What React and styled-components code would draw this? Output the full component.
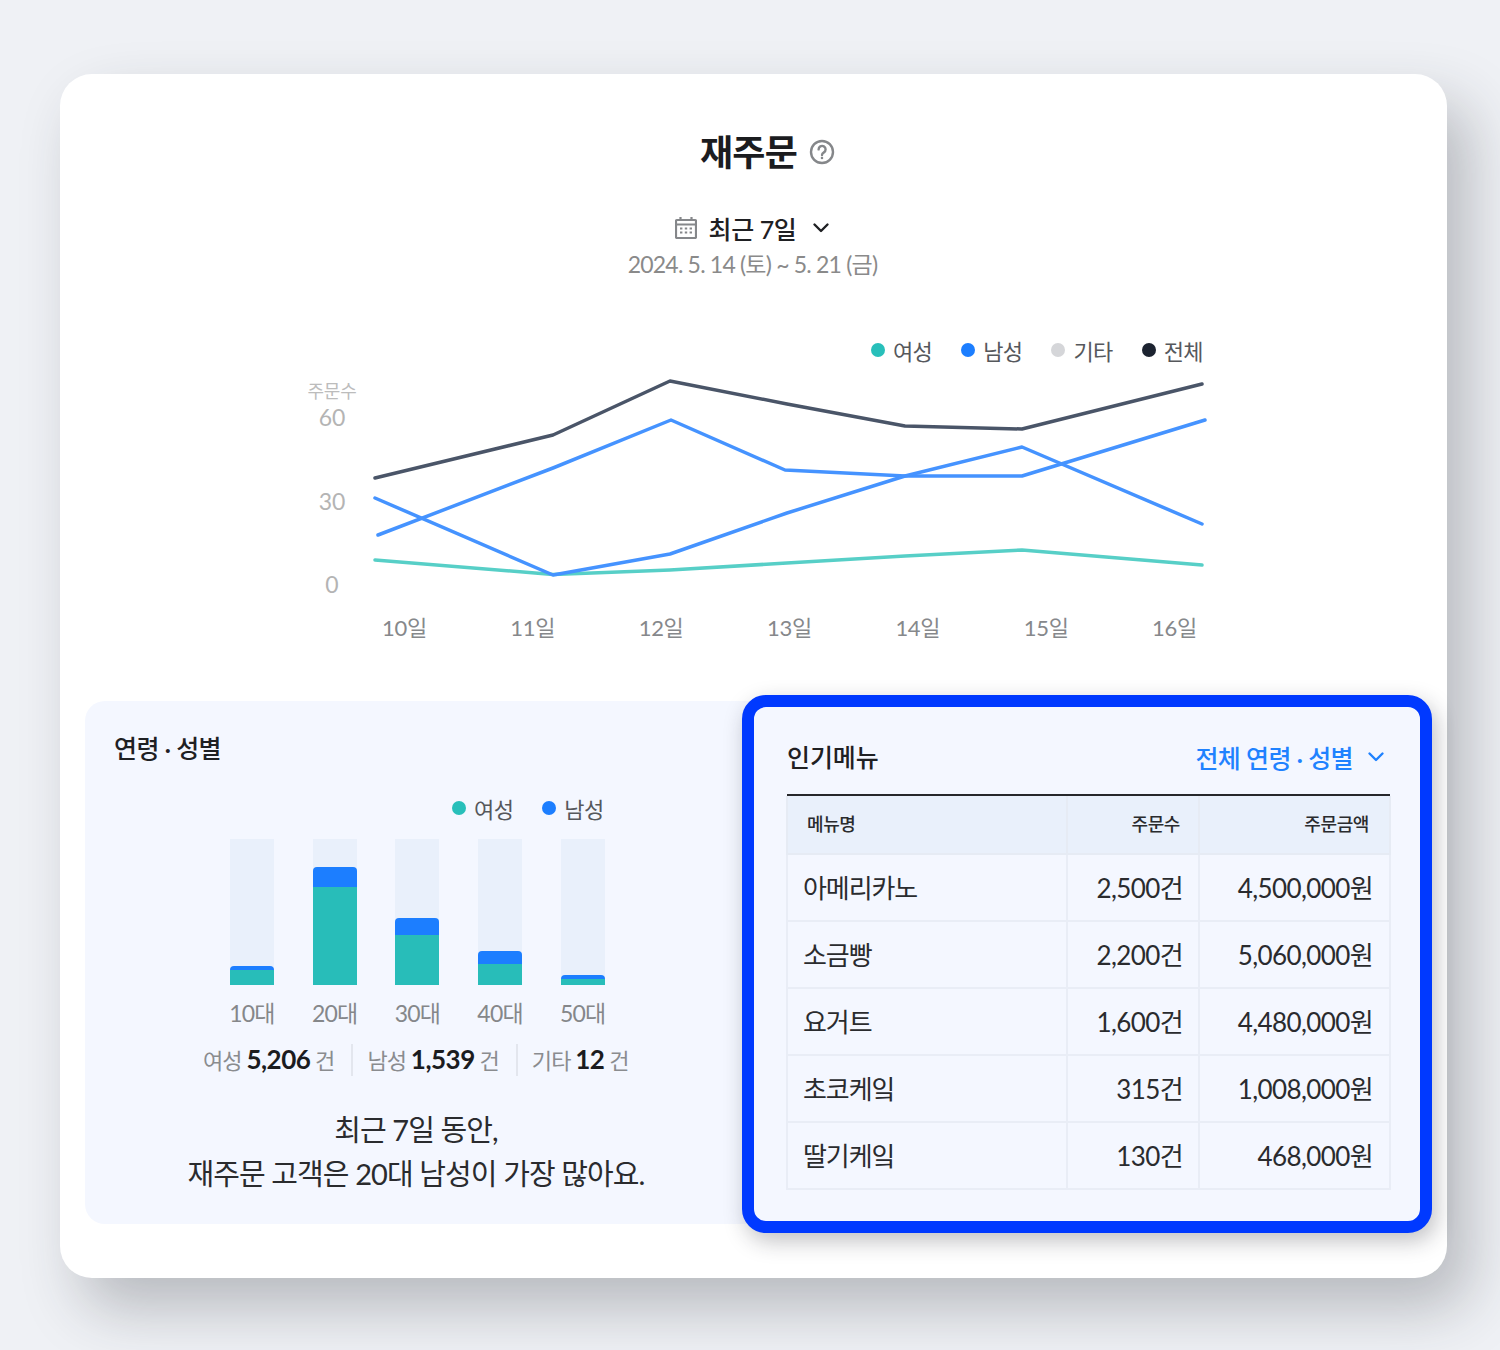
import React from 'react';
import styled, { createGlobalStyle } from 'styled-components';

const Global = createGlobalStyle`
  html, body { margin: 0; padding: 0; background: #eff1f5; }
  * { box-sizing: border-box; }
  body { font-family: Lato, "Noto Sans CJK KR", sans-serif; color: #1f2023; }
`;
const Page = styled.div`
  width: 1500px; height: 1350px; padding: 74px 0 0 60px; overflow: hidden;
`;
const Card = styled.main`
  width: 1387px; height: 1204px; background: #fff; border-radius: 32px;
  box-shadow: 22px 30px 60px rgba(40, 42, 50, 0.28);
  padding-top: 50px; display: flex; flex-direction: column;
`;
const TitleRow = styled.div`
  display: flex; justify-content: center; align-items: center; gap: 12px;
  padding-left: 28px; height: 56px;
`;
const Title = styled.h1`
  margin: 0; font-size: 36px; line-height: 56px; font-weight: 700; letter-spacing: -0.8px; color: #1b1c1f;
`;
const DateBlock = styled.div`
  margin-top: 30px; padding-right: 2px; display: flex; flex-direction: column; align-items: center;
`;
const RangeBtn = styled.div`
  display: flex; align-items: center; height: 36px; font-size: 25px; font-weight: 500;
  letter-spacing: -0.4px; color: #1f2023; gap: 12px;
  svg:last-child { margin-left: 4px; }
`;
const DateText = styled.div`
  font-size: 23px; line-height: 36px; color: #8a8a8a; letter-spacing: -0.8px; font-weight: 400;
`;
const ChartBlock = styled.section`
  margin: 50px 0 0 247px; width: 900px;
`;
const Legend = styled.div`
  display: flex; justify-content: flex-end; gap: 29px;
  padding-right: 4px; height: 36px; align-items: center;
`;
const LegendItem = styled.div`
  display: flex; align-items: center; gap: 8px; font-size: 22px; color: #56585c; letter-spacing: -0.6px;
`;
const Dot = styled.span`
  width: 14px; height: 14px; border-radius: 50%; background: ${p => p.$c};
`;
const PlotRow = styled.div`
  display: flex; height: 222px; margin-top: 2px;
`;
const YAxis = styled.div`
  width: 50px; flex-shrink: 0; display: flex; flex-direction: column; align-items: center; padding-top: 12px;
`;
const YCaption = styled.div`
  font-size: 18px; line-height: 18px; color: #bcbcbc; letter-spacing: -0.3px; white-space: nowrap;
`;
const YTick = styled.div`
  font-size: 23px; flex: 0 0 83.5px; line-height: 34px; color: #b4b4b4;
`;
const XAxis = styled.div`
  display: flex; justify-content: space-between; padding: 0 10px 0 75px; margin-top: 19px;
`;
const XLabel = styled.div`
  font-size: 22px; line-height: 34px; color: #86888b; letter-spacing: -0.3px;
`;
const Bottom = styled.div`
  display: flex; align-items: flex-start; margin-top: 50px; padding-left: 25px;
`;
const AgePanel = styled.section`
  width: 670px; height: 523px; margin-top: 6px; margin-right: -13px; background: #f4f7ff;
  border-radius: 20px 0 0 20px; padding: 30px 0 0 29px;
`;
const PanelTitle = styled.h2`
  margin: 0; font-size: 25px; line-height: 34px; font-weight: 500; letter-spacing: -0.6px; color: #1f2023;
`;
const MenuTitle = styled(PanelTitle)`
  letter-spacing: -0.1px;
`;
const AgeLegend = styled(Legend)`
  margin: 25px 0 0 338px; justify-content: flex-start; padding: 0;
`;
const Bars = styled.div`
  display: flex; gap: 38.7px; margin: 13px 0 0 116px;
`;
const BarCol = styled.div`
  width: 44px; display: flex; flex-direction: column; align-items: center;
`;
const Track = styled.div`
  width: 44px; height: 146px; background: #e9f0fb; display: flex; flex-direction: column; justify-content: flex-end;
`;
const Male = styled.div`
  background: #1c7eff; border-radius: 4px 4px 0 0;
`;
const Female = styled.div`
  background: #28bdb9;
`;
const BarLabel = styled.div`
  margin-top: 11px; font-size: 23px; line-height: 34px; color: #85878a; letter-spacing: -0.8px; white-space: nowrap;
`;
const Summary = styled.div`
  display: flex; align-items: center; margin: 13px 0 0 89px; height: 34px;
`;
const SumItem = styled.div`
  font-size: 22px; color: #8a8c8f; letter-spacing: -0.9px; white-space: nowrap;
  padding: 0 17px 0 14px; border-left: ${p => p.$sep ? '2px solid #e3e6ee' : '0'};
  line-height: 30px;
  &:first-child { padding-left: 0; }
  b { font-size: 26px; font-weight: 700; color: #1b1c1f; letter-spacing: -0.5px; }
`;
const Message = styled.p`
  margin: 31px 0 0 0; width: 604px; text-align: center; font-size: 29px; line-height: 44px;
  color: #2a2b2e; letter-spacing: -0.9px;
`;
const MenuPanel = styled.section`
  position: relative; width: 690px; height: 538px; background: #f4f7ff; border: 12px solid #0039ff;
  border-radius: 24px; box-shadow: 4px 8px 22px rgba(30, 30, 40, 0.28); padding: 33px 0 0 33px;
`;
const MenuHead = styled.div`
  display: flex; justify-content: space-between; align-items: center; width: 603px; height: 34px;
  padding-right: 5px;
`;
const Filter = styled.div`
  display: flex; align-items: center; gap: 14px; font-size: 25px; font-weight: 500; color: #1f82ff; letter-spacing: -0.6px;
`;
const TableWrap = styled.div`
  margin-top: 20px; width: 603px; border-top: 2px solid #26272b;
`;
const Table = styled.table`
  width: 603px; table-layout: fixed; border-collapse: collapse; margin: 0 0 0 -1px;
`;
const Th = styled.th`
  height: 58px; background: #e9f0fb; font-size: 18px; font-weight: 500; color: #2a2b2e; letter-spacing: -0.4px;
  text-align: ${p => p.$left ? 'left' : 'right'};
  padding: ${p => p.$left ? '0 0 3px 19px' : '0 18px 3px 0'};
  border: 2px solid #e6ebf4; border-top: 0;
  &:last-child { padding-right: 20px; }
`;
const Td = styled.td`
  height: 67px; font-size: 26px; color: #2a2b2e; letter-spacing: ${p => p.$left ? '-1.1px' : '-0.6px'};
  text-align: ${p => p.$left ? 'left' : 'right'};
  padding: ${p => p.$left ? '0 0 2px 15px' : '0 15px 2px 0'};
  border: 2px solid #e9edf6;
  &:last-child { padding-right: 16px; }
`;
const HelpIcon = () => (
  <svg width="26" height="26" viewBox="0 0 26 26" fill="none" stroke="#85878a" strokeWidth="2.4" strokeLinecap="round" strokeLinejoin="round">
    <circle cx="13" cy="13" r="11" />
    <path d="M9.600 10.400a3.500 3.500 0 1 1 5.300 3c-1.200.7-1.900 1.300-1.900 2.600" />
    <circle cx="13" cy="19" r=".6" fill="#85878a" strokeWidth="1.400" />
  </svg>
);
const CalIcon = () => (
  <svg width="22" height="22" viewBox="0 0 22 22" fill="none" stroke="#85878a" strokeWidth="2.200">
    <rect x="1" y="3" width="20" height="18" rx="1" />
    <path d="M1 7.500h20M5.500 0v4M16.500 0v4" />
    <path d="M5 11.500h2.400M9.800 11.500h2.400M14.600 11.500h2.400M5 15.500h2.400M9.800 15.500h2.400M14.600 15.500h2.400" />
  </svg>
);
const Chevron = ({ c = '#1f2023' }) => (
  <svg width="18" height="12" viewBox="0 0 18 12" fill="none" stroke={c} strokeWidth="2.400" strokeLinecap="round" strokeLinejoin="round">
    <path d="M2.500 2.500 9 9l6.500-6.500" />
  </svg>
);

const px = pts => pts.map(([x, y]) => `${x - 357},${y - 370}`).join(' ');
const lines = [
  ['#57cfc7', [[375, 560], [553, 574.5], [670, 570], [787, 563], [905, 556], [1022, 550], [1202, 565]]],
  ['#4a5568', [[375, 478], [553, 435], [670, 381], [787, 404], [905, 426], [1022, 429], [1202, 384]]],
  ['#4593ff', [[378, 535], [553, 468], [671, 420], [785, 470], [905, 476], [1022, 476], [1205, 420]]],
  ['#4593ff', [[375, 498], [553, 575], [670, 554], [787, 513], [905, 476], [1022, 447], [1202, 524]]],
];
const days = ['10일', '11일', '12일', '13일', '14일', '15일', '16일'];
const ages = [['10대', 19, 15], ['20대', 118, 98], ['30대', 67, 50], ['40대', 34, 21], ['50대', 10, 6]];
const rows = [
  ['아메리카노', '2,500건', '4,500,000원'],
  ['소금빵', '2,200건', '5,060,000원'],
  ['요거트', '1,600건', '4,480,000원'],
  ['초코케잌', '315건', '1,008,000원'],
  ['딸기케잌', '130건', '468,000원'],
];

export default function App() {
  return (
    <Page>
      <Global />
      <Card>
        <TitleRow>
          <Title>재주문</Title>
          <HelpIcon />
        </TitleRow>
        <DateBlock>
          <RangeBtn><CalIcon />최근 7일<Chevron /></RangeBtn>
          <DateText>2024. 5. 14 (토) ~ 5. 21 (금)</DateText>
        </DateBlock>
        <ChartBlock>
          <Legend>
            <LegendItem><Dot $c="#28bfba" />여성</LegendItem>
            <LegendItem><Dot $c="#1c7eff" />남성</LegendItem>
            <LegendItem><Dot $c="#d5d6d9" />기타</LegendItem>
            <LegendItem><Dot $c="#1c2330" />전체</LegendItem>
          </Legend>
          <PlotRow>
            <YAxis>
              <YCaption>주문수</YCaption>
              <YTick>60</YTick>
              <YTick>30</YTick>
              <YTick>0</YTick>
            </YAxis>
            <svg width="850" height="222" viewBox="0 0 850 222" fill="none">
              {lines.map(([c, p], i) => (
                <polyline key={i} points={px(p)} stroke={c} strokeWidth="3.5" strokeLinecap="round" strokeLinejoin="round" />
              ))}
            </svg>
          </PlotRow>
          <XAxis>{days.map(d => <XLabel key={d}>{d}</XLabel>)}</XAxis>
        </ChartBlock>
        <Bottom>
          <AgePanel>
            <PanelTitle>연령 · 성별</PanelTitle>
            <AgeLegend>
              <LegendItem><Dot $c="#28bfba" />여성</LegendItem>
              <LegendItem><Dot $c="#1c7eff" />남성</LegendItem>
            </AgeLegend>
            <Bars>
              {ages.map(([a, total, f]) => (
                <BarCol key={a}>
                  <Track>
                    <Male style={{ height: total - f }} />
                    <Female style={{ height: f }} />
                  </Track>
                  <BarLabel>{a}</BarLabel>
                </BarCol>
              ))}
            </Bars>
            <Summary>
              <SumItem>여성 <b>5,206</b> 건</SumItem>
              <SumItem $sep>남성 <b>1,539</b> 건</SumItem>
              <SumItem $sep>기타 <b>12</b> 건</SumItem>
            </Summary>
            <Message>최근 7일 동안,<br />재주문 고객은 20대 남성이 가장 많아요.</Message>
          </AgePanel>
          <MenuPanel>
            <MenuHead>
              <MenuTitle>인기메뉴</MenuTitle>
              <Filter>전체 연령 · 성별<Chevron c="#1f82ff" /></Filter>
            </MenuHead>
            <TableWrap>
              <Table>
                <colgroup>
                  <col style={{ width: 280 }} />
                  <col style={{ width: 132 }} />
                  <col style={{ width: 191 }} />
                </colgroup>
                <thead>
                  <tr><Th $left>메뉴명</Th><Th>주문수</Th><Th>주문금액</Th></tr>
                </thead>
                <tbody>
                  {rows.map(r => (
                    <tr key={r[0]}><Td $left>{r[0]}</Td><Td>{r[1]}</Td><Td>{r[2]}</Td></tr>
                  ))}
                </tbody>
              </Table>
            </TableWrap>
          </MenuPanel>
        </Bottom>
      </Card>
    </Page>
  );
}
